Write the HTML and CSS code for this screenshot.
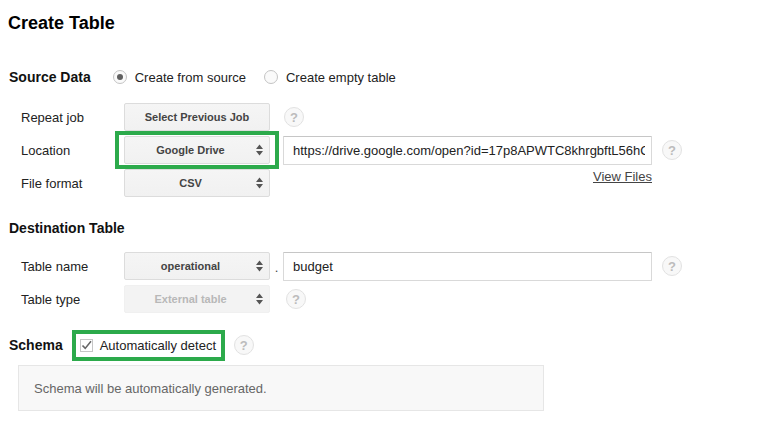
FILE: index.html
```html
<!DOCTYPE html>
<html>
<head>
<meta charset="utf-8">
<title>Create Table</title>
<link rel="stylesheet" href="styles.css">
</head>
<body>
<div class="page">
  <h1 class="title">Create Table</h1>

  <div class="sec-head sec-source">
    <span class="sec-title">Source Data</span>
    <label class="radio-opt first"><span class="radio checked"></span>Create from source</label>
    <label class="radio-opt"><span class="radio"></span>Create empty table</label>
  </div>
  <div class="rows rows-source">
    <div class="row">
      <span class="lbl">Repeat job</span>
      <button class="btn" type="button">Select Previous Job</button>
      <span class="help help-near">?</span>
    </div>
    <div class="row">
      <span class="lbl">Location</span>
      <div class="sel hl"><span class="sel-text">Google Drive</span><svg class="arrows" width="7" height="12" viewBox="0 0 7 12"><path d="M0 5 L3.5 0.5 L7 5 Z M0 7 L7 7 L3.5 11.5 Z" fill="#555"/></svg></div>
      <input class="txt" type="text" value="https://drive.google.com/open?id=17p8APWTC8khrgbftL56hOq3xZ">
      <span class="help help-far">?</span>
    </div>
    <div class="row">
      <span class="lbl">File format</span>
      <div class="sel"><span class="sel-text">CSV</span><svg class="arrows" width="7" height="12" viewBox="0 0 7 12"><path d="M0 5 L3.5 0.5 L7 5 Z M0 7 L7 7 L3.5 11.5 Z" fill="#555"/></svg></div>
      <div class="link-wrap"><a class="link" href="#">View Files</a></div>
    </div>
  </div>

  <div class="sec-head sec-dest">
    <span class="sec-title">Destination Table</span>
  </div>
  <div class="rows rows-dest">
    <div class="row">
      <span class="lbl">Table name</span>
      <div class="sel"><span class="sel-text">operational</span><svg class="arrows" width="7" height="12" viewBox="0 0 7 12"><path d="M0 5 L3.5 0.5 L7 5 Z M0 7 L7 7 L3.5 11.5 Z" fill="#555"/></svg></div>
      <span class="dot">.</span>
      <input class="txt txt-nomargin" type="text" value="budget">
      <span class="help help-far">?</span>
    </div>
    <div class="row">
      <span class="lbl">Table type</span>
      <div class="sel disabled"><span class="sel-text">External table</span><svg class="arrows" width="7" height="12" viewBox="0 0 7 12"><path d="M0 5 L3.5 0.5 L7 5 Z M0 7 L7 7 L3.5 11.5 Z" fill="#555"/></svg></div>
      <span class="help help-type">?</span>
    </div>
  </div>

  <div class="sec-head sec-schema">
    <span class="sec-title">Schema</span>
    <label class="auto">
      <span class="check"><svg width="13" height="13" viewBox="0 0 13 13"><path d="M2.5 6.5 L5.2 9.4 L11 2.2" fill="none" stroke="#666" stroke-width="1.6"/></svg></span>
      Automatically detect
    </label>
    <span class="help help-schema">?</span>
  </div>
  <div class="schema-box">Schema will be automatically generated.</div>
</div>
</body>
</html>
```

FILE: styles.css
```css
* { box-sizing: border-box; }

html, body {
  margin: 0;
  padding: 0;
  background: #ffffff;
}

body {
  font-family: "Liberation Sans", Arial, sans-serif;
  font-size: 13px;
  color: #222;
}

.page {
  padding: 11px 8px 0 8px;
}

.title {
  margin: 0;
  font-size: 18px;
  line-height: 24px;
  font-weight: bold;
  color: #000;
}

.sec-head {
  display: flex;
  align-items: center;
  height: 20px;
}

.sec-source { margin-top: 32px; padding-left: 1px; }
.sec-dest { margin-top: 21px; padding-left: 1px; }
.sec-schema { margin-top: 17px; height: 30px; padding-left: 1px; }

.sec-title {
  font-size: 14px;
  font-weight: bold;
  color: #111;
}

.radio-opt {
  display: flex;
  align-items: center;
  font-size: 13px;
  color: #222;
  margin-left: 18px;
}

.radio-opt.first { margin-left: 22px; }

.radio {
  width: 14px;
  height: 14px;
  border: 1px solid #c4c4c4;
  border-radius: 50%;
  background: #fafafa;
  margin-right: 8px;
  display: flex;
  align-items: center;
  justify-content: center;
}

.radio.checked::before {
  content: "";
  width: 6px;
  height: 6px;
  border-radius: 50%;
  background: #606060;
}

.rows {
  display: flex;
  flex-direction: column;
  gap: 5px;
  padding-left: 13px;
}

.rows-source { margin-top: 16px; }
.rows-dest { margin-top: 14px; }

.row {
  display: flex;
  align-items: center;
  height: 28px;
}

.lbl {
  width: 103px;
  flex: none;
  color: #222;
}

.btn {
  width: 146px;
  height: 28px;
  flex: none;
  margin: 0;
  padding: 0;
  font-family: "Liberation Sans", Arial, sans-serif;
  font-size: 11px;
  font-weight: bold;
  color: #444;
  background: linear-gradient(#f5f5f5, #f1f1f1);
  border: 1px solid #dcdcdc;
  border-radius: 2px;
}

.sel {
  position: relative;
  width: 146px;
  height: 28px;
  flex: none;
  display: flex;
  align-items: center;
  padding-right: 6px;
  font-size: 11px;
  font-weight: bold;
  color: #444;
  background: linear-gradient(#f5f5f5, #f1f1f1);
  border: 1px solid #dcdcdc;
  border-radius: 2px;
}

.sel-text {
  flex: 1;
  text-align: center;
}

.arrows { flex: none; }

.sel.disabled {
  background: #f3f3f3;
  border-color: #f0f0f0;
  color: #b8b8b8;
}

.sel.hl::after {
  content: "";
  position: absolute;
  top: -6px;
  bottom: -6px;
  left: -10px;
  right: -10px;
  border: 4px solid #2caa4b;
}

.txt {
  width: 369px;
  height: 29px;
  flex: none;
  margin: 0 0 0 13px;
  padding: 0 6px 0 9px;
  font-family: "Liberation Sans", Arial, sans-serif;
  font-size: 13px;
  color: #222;
  background: #fff;
  border: 1px solid #d9d9d9;
  border-top-color: #c6c6c6;
  border-radius: 1px;
  outline: none;
}

.txt-nomargin { margin-left: 0; }

.dot {
  width: 13px;
  flex: none;
  text-align: center;
  color: #444;
  padding-top: 3px;
}

.link-wrap {
  width: 369px;
  margin-left: 13px;
  align-self: flex-start;
  text-align: right;
  line-height: 15px;
  flex: none;
}

.link {
  color: #444;
  text-decoration: underline;
  font-size: 13px;
}

.help {
  width: 20px;
  height: 20px;
  flex: none;
  border: 1px solid #e2e2e2;
  border-radius: 50%;
  background: #f8f8f8;
  color: #bcbcbc;
  font-size: 13px;
  font-weight: bold;
  display: flex;
  align-items: center;
  justify-content: center;
}

.help-near { margin-left: 14px; }
.help-far { margin-left: 10px; }
.help-type { margin-left: 16px; }
.help-schema { margin-left: 9px; }

.auto {
  display: flex;
  align-items: center;
  height: 31px;
  width: 153px;
  margin-left: 9px;
  padding-left: 4px;
  border: 4px solid #2caa4b;
  font-size: 13px;
  color: #222;
  gap: 7px;
}

.check {
  width: 13px;
  height: 13px;
  border: 1px solid #c6c6c6;
  background: #fff;
  display: flex;
  align-items: center;
  justify-content: center;
  position: relative;
}

.check svg {
  position: absolute;
  left: -1px;
  top: -1px;
}

.schema-box {
  margin-top: 5px;
  margin-left: 10px;
  width: 526px;
  height: 46px;
  background: #f8f8f8;
  border: 1px solid #e6e6e6;
  padding-left: 15px;
  display: flex;
  align-items: center;
  color: #666;
  font-size: 13px;
}
```
